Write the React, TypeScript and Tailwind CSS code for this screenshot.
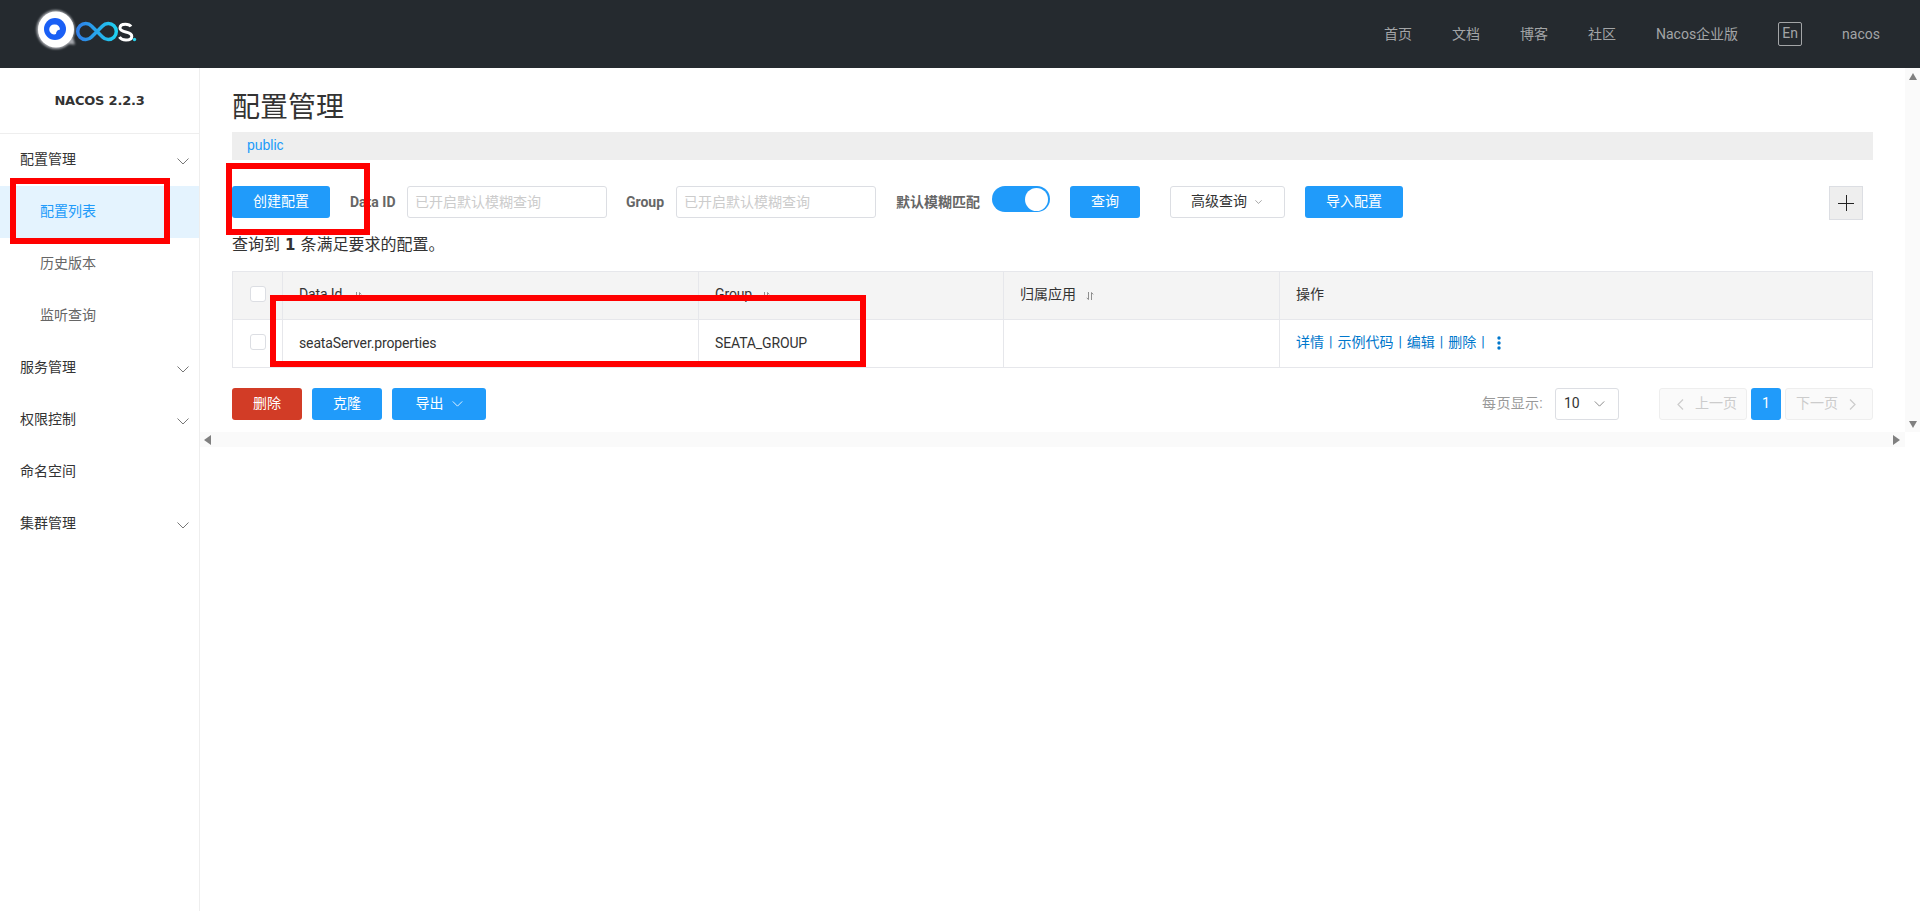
const fontStack = "font-['Roboto','Noto_Sans_CJK_SC',sans-serif]";

const navLinks = ["首页", "文档", "博客", "社区", "Nacos企业版"];

const sideMenu = [
  { label: "配置管理", arrow: true },
  { label: "配置列表", sub: true, active: true },
  { label: "历史版本", sub: true },
  { label: "监听查询", sub: true },
  { label: "服务管理", arrow: true },
  { label: "权限控制", arrow: true },
  { label: "命名空间" },
  { label: "集群管理", arrow: true },
];

const rowActions = ["详情", "示例代码", "编辑", "删除"];

function Logo() {
  return (
    <svg viewBox="30 0 110 68" className="h-[68px] w-[110px]">
      <defs>
        <linearGradient id="loop" x1="0" x2="1" y1="0" y2="0">
          <stop offset="0" stopColor="#2f7fe8" />
          <stop offset="1" stopColor="#1fd0f0" />
        </linearGradient>
        <filter id="soft" x="-20%" y="-20%" width="140%" height="140%">
          <feGaussianBlur stdDeviation="1" />
        </filter>
      </defs>
      <path
        d="M56 10a19.500 19.500 0 1 0 13 34l6 .5-2-7a19.500 19.500 0 0 0-17-27.500z"
        fill="#a9abb0"
        filter="url(#soft)"
      />
      <circle cx="56" cy="29.500" r="18" fill="#fff" />
      <circle cx="55" cy="29" r="11" fill="#1a5ff5" />
      <path d="M55 24.500a5 5 0 1 0 1 9.600c0-2.600 1.800-4.300 4-4.500A5 5 0 0 0 55 24.500z" fill="#fff" />
      <path
        d="M97 31.500L91.500 26A8 8 0 1 0 91.500 37L97 31.500L102.500 26A8 8 0 1 1 102.500 37L97 31.500"
        fill="none"
        stroke="url(#loop)"
        strokeWidth="3.500"
      />
      <path
        d="M131 26.500c-1-1.600-3-2.300-5.600-2.300-3.200 0-5.400 1.400-5.400 3.800 0 5.500 11.800 2.300 11.800 8.200 0 2.500-2.400 3.800-5.800 3.800-3 0-5.300-1-6.600-3"
        fill="none"
        stroke="#fff"
        strokeWidth="3"
      />
      <circle cx="134.500" cy="39.500" r="1.700" fill="#27d3ee" />
    </svg>
  );
}

function Chevron({ className = "" }: { className?: string }) {
  return (
    <svg viewBox="0 0 12 7" className={className} fill="none" stroke="currentColor" strokeWidth="1">
      <path d="M.5.5L6 6l5.500-5.500" />
    </svg>
  );
}

// prev / next arrow of the pagination
function PageArrow({ flip = false }: { flip?: boolean }) {
  return (
    <svg viewBox="0 0 7 11" className="h-[11px] w-[7px]" fill="none" stroke="currentColor" strokeWidth="1.200">
      <path d={flip ? "M1 .5l5 5-5 5" : "M6 .5l-5 5 5 5"} />
    </svg>
  );
}

function SortIcon({ className = "ml-[14px]" }: { className?: string }) {
  return (
    <svg viewBox="0 0 8 10" className={`${className} inline-block h-[10px] w-[8px] align-[-2px]`} fill="none" stroke="#8f8f8f" strokeWidth="1">
      <path d="M2.500 1v7.500M.8 6.800l1.700 1.900M5.500 9V1.500M5.500 1.500l1.700 1.900" />
    </svg>
  );
}

function Checkbox() {
  return <div className="mx-auto mb-1 h-4 w-4 rounded-[3px] border border-[#dcdee3] bg-white" />;
}

function BlueButton({ children, className = "" }: { children: React.ReactNode; className?: string }) {
  return (
    <button className={`flex h-8 items-center justify-center rounded-[3px] bg-[#209bfa] pb-[2px] text-sm text-white ${className}`}>
      {children}
    </button>
  );
}

function SearchInput({ className = "" }: { className?: string }) {
  return (
    <input
      readOnly
      placeholder="已开启默认模糊查询"
      className={`h-8 rounded-[3px] border border-[#dcdee3] bg-white pl-[7px] text-sm placeholder:text-[#ccc] ${className}`}
    />
  );
}

export default function App() {
  return (
    <div className={`relative flex h-screen flex-col overflow-hidden bg-white text-sm text-[#333] ${fontStack}`}>
      {/* header */}
      <header className="flex h-[68px] shrink-0 items-center justify-between bg-[#252a2f] pl-[30px] pr-10 text-[#a3a5a7]">
        <Logo />
        <nav className="flex items-center gap-10">
          {navLinks.map((link) => (
            <span key={link}>{link}</span>
          ))}
          <span className="flex h-[24px] w-[24px] items-center justify-center rounded-[2px] border border-[#a3a5a7] pb-[2px]">En</span>
          <span>nacos</span>
        </nav>
      </header>

      <div className="flex min-h-0 flex-1">
        {/* sidebar */}
        <aside className="w-[200px] shrink-0 border-r border-[#eee]">
          <div className="flex h-[66px] items-center justify-center border-b border-[#eee] pt-[2px] font-['DejaVu_Sans',sans-serif] text-[13px] font-bold tracking-[-0.2px] text-[#333]">
            NACOS 2.2.3
          </div>
          {sideMenu.map((item) => (
            <div
              key={item.label}
              className={`flex h-[52px] items-center justify-between pr-[10px] ${item.sub ? "pl-10" : "pl-5"} ${
                item.active ? "bg-[#e4f3fe] text-[#209bfa]" : item.sub ? "text-[#666]" : "text-[#333]"
              }`}
            >
              <span className="pb-[2px]">{item.label}</span>
              {item.arrow && <Chevron className="mt-[2px] h-[7px] w-3 text-[#777]" />}
            </div>
          ))}
        </aside>

        <main className="min-w-0 flex-1">
          <div className="flex h-[364px]">
            <div className="min-w-0 flex-1 px-8">
              <h1 className="mb-[6px] mt-[22px] text-[28px] leading-9 text-[#333]">配置管理</h1>
              <div className="flex h-7 items-center bg-[#eee] pb-[2px] pl-[15px] font-['Liberation_Sans',sans-serif] text-sm text-[#209bfa]">public</div>

              {/* toolbar */}
              <div className="mt-[26px] flex h-[34px] items-start">
                <BlueButton className="w-[98px]">创建配置</BlueButton>
                <label className="ml-5 mr-3 flex h-8 w-[45px] items-center whitespace-nowrap font-bold text-[#666]">Data ID</label>
                <SearchInput className="w-[200px]" />
                <label className="ml-[19px] mr-3 flex h-8 w-[38px] items-center font-bold text-[#666]">Group</label>
                <SearchInput className="w-[200px]" />
                <label className="ml-5 mr-3 flex h-8 w-[84px] items-center whitespace-nowrap font-bold text-[#666]">默认模糊匹配</label>
                <div className="flex h-[26px] w-[58px] items-center justify-end rounded-full bg-[#209bfa] pr-[2px]">
                  <div className="h-[23px] w-[23px] rounded-full bg-white" />
                </div>
                <BlueButton className="ml-5 w-[70px]">查询</BlueButton>
                <button className="ml-[30px] flex h-8 w-[115px] items-center justify-center gap-2 rounded-[3px] border border-[#dcdee3] bg-white pb-[2px] pr-[2px]">
                  高级查询
                  <Chevron className="mt-[2px] h-1 w-[7px] text-[#666]" />
                </button>
                <BlueButton className="ml-5 w-[98px]">导入配置</BlueButton>
                <button className="ml-auto mr-[10px] flex h-[34px] w-[34px] items-center justify-center border border-[#dcdee3] bg-[#eee]">
                  <svg viewBox="0 0 16 16" className="h-4 w-4" stroke="#222" strokeWidth="1">
                    <path d="M0 8.500h16M8.500 0v16" />
                  </svg>
                </button>
              </div>

              <p className="mb-[14px] mt-[13px] text-base leading-6 text-[#333]">
                查询到 <strong className="mx-[1px] font-['DejaVu_Sans',sans-serif] text-[15px] font-bold">1</strong> 条满足要求的配置。
              </p>

              {/* table */}
              <table className="w-full table-fixed border-collapse border border-[#e6e7eb] text-left">
                <colgroup>
                  <col className="w-[50px]" />
                  <col className="w-[416px]" />
                  <col className="w-[305px]" />
                  <col className="w-[276px]" />
                  <col />
                </colgroup>
                <thead>
                  <tr className="h-[48px] bg-[#f4f4f4]">
                    <th className="border border-[#e6e7eb]"><Checkbox /></th>
                    <th className="border border-[#e6e7eb] pb-[3px] pl-4 font-normal tracking-[-0.13px]">Data Id<SortIcon className="ml-3" /></th>
                    <th className="border border-[#e6e7eb] pb-[3px] pl-4 font-normal tracking-[-0.13px]">Group<SortIcon className="ml-[10px]" /></th>
                    <th className="border border-[#e6e7eb] pb-[3px] pl-4 font-normal">归属应用<SortIcon className="ml-[10px]" /></th>
                    <th className="border border-[#e6e7eb] pb-[3px] pl-4 font-normal">操作</th>
                  </tr>
                </thead>
                <tbody>
                  <tr className="h-[48px]">
                    <td className="border border-[#e6e7eb]"><Checkbox /></td>
                    <td className="border border-[#e6e7eb] pb-[2px] pl-4 tracking-[-0.13px]">seataServer.properties</td>
                    <td className="border border-[#e6e7eb] pb-[2px] pl-4 tracking-[-0.13px]">SEATA_GROUP</td>
                    <td className="border border-[#e6e7eb]" />
                    <td className="border border-[#e6e7eb] pb-[3px] pl-4">
                      <div className="flex items-center text-[#0077cc]">
                        {rowActions.map((action) => (
                          <span key={action}>
                            {action}
                            <span className="mx-[5px]">|</span>
                          </span>
                        ))}
                        <svg viewBox="0 0 4 14" className="ml-[7px] mt-[2px] h-[14px] w-1" fill="#0077cc">
                          <circle cx="2" cy="2" r="1.700" />
                          <circle cx="2" cy="7" r="1.700" />
                          <circle cx="2" cy="12" r="1.700" />
                        </svg>
                      </div>
                    </td>
                  </tr>
                </tbody>
              </table>

              {/* footer actions + pagination */}
              <div className="mt-5 flex h-8 items-center">
                <button className="h-8 w-[70px] rounded-[3px] bg-[#d23c26] pb-[2px] text-white">删除</button>
                <BlueButton className="ml-[10px] w-[70px]">克隆</BlueButton>
                <BlueButton className="ml-[10px] w-[94px] gap-2">
                  导出
                  <Chevron className="mt-[2px] h-[6px] w-[11px]" />
                </BlueButton>
                <span className="ml-auto pb-[2px] tracking-[0.3px] text-[#999]">每页显示:</span>
                <div className="ml-3 flex h-8 w-16 items-center justify-between rounded-[3px] border border-[#dcdee3] pl-2 pr-[13px]">
                  <span className="pb-[2px]">10</span>
                  <Chevron className="h-[6px] w-[11px] text-[#777]" />
                </div>
                <div className="ml-10 flex h-8 w-[88px] items-center gap-[11px] rounded-[3px] border border-[#eee] bg-[#fafafa] pl-[17px] text-[#ccc]">
                  <PageArrow />
                  <span className="whitespace-nowrap pb-[2px]">上一页</span>
                </div>
                <div className="ml-1 flex h-8 w-[30px] items-center justify-center rounded-[3px] bg-[#209bfa] pb-[2px] text-white">1</div>
                <div className="ml-1 flex h-8 w-[88px] items-center gap-[11px] rounded-[3px] border border-[#eee] bg-[#fafafa] pl-[10px] text-[#ccc]">
                  <span className="whitespace-nowrap pb-[2px]">下一页</span>
                  <PageArrow flip />
                </div>
              </div>
            </div>

            {/* vertical scrollbar */}
            <div className="flex w-[15px] shrink-0 flex-col items-center justify-between bg-[#fafafa] pb-1 pt-[5px]">
              <div className="h-0 w-0 border-x-[4px] border-b-[7px] border-x-transparent border-b-[#808080]" />
              <div className="h-0 w-0 border-x-[4px] border-t-[7px] border-x-transparent border-t-[#808080]" />
            </div>
          </div>

          {/* horizontal scrollbar */}
          <div className="mr-[15px] flex h-[15px] items-center justify-between bg-[#fafafa] pl-[4px] pr-[5px]">
            <div className="h-0 w-0 border-y-[5px] border-r-[7px] border-y-transparent border-r-[#808080]" />
            <div className="h-0 w-0 border-y-[5px] border-l-[7px] border-y-transparent border-l-[#808080]" />
          </div>
        </main>
      </div>

      {/* red annotation boxes drawn over the screenshot */}
      <div className="pointer-events-none absolute left-[10px] top-[178px] h-[66px] w-[160px] border-[6px] border-[#ff0000]" />
      <div className="pointer-events-none absolute left-[226px] top-[163px] h-[72px] w-[144px] border-[6px] border-[#ff0000]" />
      <div className="pointer-events-none absolute left-[270px] top-[295px] h-[72px] w-[596px] border-[6px] border-[#ff0000]" />
    </div>
  );
}
